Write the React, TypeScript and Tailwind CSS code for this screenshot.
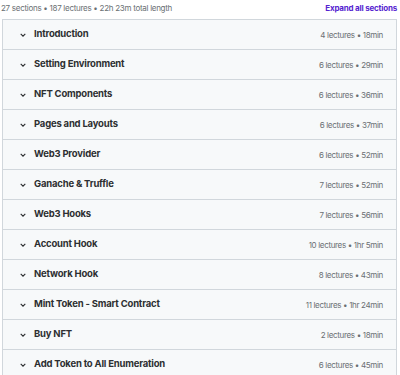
import React from "react";

const sections: [string, string][] = [
  ["Introduction", "4 lectures • 18min"],
  ["Setting Environment", "6 lectures • 29min"],
  ["NFT Components", "6 lectures • 36min"],
  ["Pages and Layouts", "6 lectures • 37min"],
  ["Web3 Provider", "6 lectures • 52min"],
  ["Ganache & Truffle", "7 lectures • 52min"],
  ["Web3 Hooks", "7 lectures • 56min"],
  ["Account Hook", "10 lectures • 1hr 5min"],
  ["Network Hook", "8 lectures • 43min"],
  ["Mint Token - Smart Contract", "11 lectures • 1hr 24min"],
  ["Buy NFT", "2 lectures • 18min"],
  ["Add Token to All Enumeration", "6 lectures • 45min"],
];

function Chevron() {
  return (
    <svg width="6" height="4" viewBox="0 0 6 4" className="shrink-0">
      <path d="M0.7 0.8 L3 3.1 L5.3 0.8" fill="none" stroke="#2d2f31" strokeWidth="1.1" />
    </svg>
  );
}

export default function App() {
  return (
    <div className="w-[400px] h-[375px] overflow-hidden bg-white" style={{ fontFamily: "Inter, 'Noto Sans', sans-serif" }}>
      <div className="flex items-center justify-between pl-[1px] pr-[3px] h-[19px] pb-[3px]">
        <span className="text-[8px] text-[#6a6f73] tracking-[-0.28px]">27 sections • 187 lectures • 22h 23m total length</span>
        <span className="text-[8px] font-bold text-[#5624d0] tracking-[-0.2px]">Expand all sections</span>
      </div>
      <div className="ml-[2px] mr-[3px] border border-[#d1d7dc] border-b-0">
        {sections.map(([title, meta]) => (
          <div key={title} className="flex items-center h-[30px] bg-[#f7f9fa] border-b border-[#d1d7dc] pl-[17px] pr-[13px]">
            <Chevron />
            <span className="ml-[8px] text-[9.5px] font-bold text-[#2d2f31] tracking-[-0.2px]">{title}</span>
            <span className="ml-auto text-[8px] text-[#6a6f73] tracking-[-0.33px]">{meta}</span>
          </div>
        ))}
      </div>
    </div>
  );
}
